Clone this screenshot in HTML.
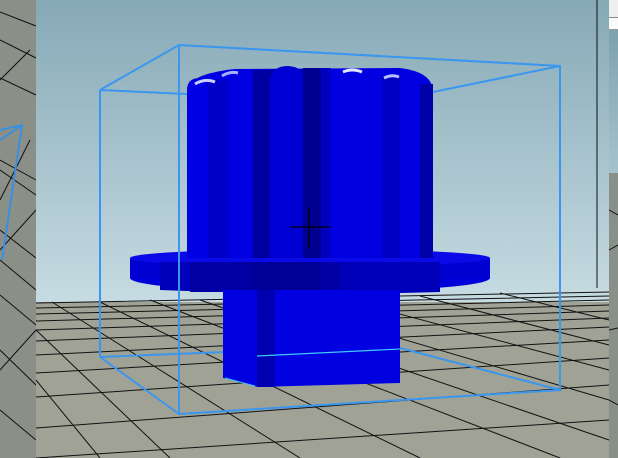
<!DOCTYPE html>
<html><head><style>
html,body{margin:0;padding:0;width:618px;height:458px;overflow:hidden;background:#8c9189}
svg{display:block}
</style></head><body>
<svg width="618" height="458" viewBox="0 0 618 458" xmlns="http://www.w3.org/2000/svg">
<defs>
<linearGradient id="sky" x1="0" y1="0" x2="0" y2="1">
<stop offset="0" stop-color="#86a9b6"/><stop offset="1" stop-color="#c6dbe2"/>
</linearGradient>
<linearGradient id="sky2" x1="0" y1="0" x2="0" y2="1">
<stop offset="0" stop-color="#7ea2b0"/><stop offset="1" stop-color="#a6c2cc"/>
</linearGradient>
</defs>
<rect x="0" y="0" width="36" height="458" fill="#8a9088"/>
<g stroke="#111" stroke-width="1" fill="none">
<path d="M0 12 L36 26 M0 40 L36 58 M0 78 L36 95 M0 160 L36 180 M0 170 L36 195 M0 230 L36 258 M0 260 L36 290 M0 295 L36 325 M0 350 L36 385 M0 410 L36 440 M0 200 L30 140 M0 250 L36 210 M0 370 L36 330 M0 80 L30 50"/>
</g>
<path d="M0 130 L22 125 L2 260 M0 140 L22 125" stroke="#3a8fe0" stroke-width="2" fill="none"/>
<rect x="36" y="0" width="573" height="302" fill="url(#sky)"/>
<rect x="36" y="302" width="573" height="156" fill="#a0a296"/>
<g stroke="#111" stroke-width="1" fill="none">
<path d="M36 303 L609 292 M36 308 L609 296 M36 314 L609 300 M36 321 L609 305 M36 330 L609 311 M36 341 L609 318 M36 355 L609 327 M36 373 L609 340 M36 397 L609 358 M36 428 L609 385 M36 458 L609 420"/>
<path d="M52 302 L300 458 M100 302 L420 458 M150 300 L560 458 M200 300 L609 440 M270 300 L609 400 M340 298 L609 370 M36 330 L170 458 M36 380 L100 458 M420 296 L609 345 M500 293 L609 320"/>
</g>
<line x1="597" y1="0" x2="597" y2="288" stroke="#111" stroke-width="1"/>
<rect x="609" y="0" width="9" height="458" fill="#899087"/>
<rect x="609" y="0" width="9" height="17" fill="#efefef"/>
<rect x="609" y="17" width="9" height="1" fill="#888"/>
<rect x="609" y="18" width="9" height="11" fill="#fafafa"/>
<rect x="609" y="29" width="9" height="1" fill="#999"/>
<rect x="609" y="30" width="9" height="143" fill="url(#sky2)"/>
<g stroke="#111" stroke-width="1"><path d="M609 210 L618 215 M609 250 L618 245 M609 330 L618 328 M609 400 L618 405"/></g>
<g stroke="#3a96ee" stroke-width="2" fill="none">
<path d="M100 90 L179 45 M100 90 L187 94 M100 90 L100 357 M100 357 L225 352 M400 348 L560 390 M560 66 L433 92"/>
</g>
<ellipse cx="310" cy="278" rx="180" ry="14" fill="#0000d8"/>
<rect x="130" y="258" width="360" height="20" fill="#0000d0"/>
<ellipse cx="310" cy="258" rx="180" ry="9" fill="#0a0ae8"/>
<path d="M160 262 L440 262 L440 292 Q310 296 160 290 Z" fill="#0000b8"/>
<rect x="190" y="262" width="150" height="30" fill="#0000a4"/>
<rect x="250" y="262" width="70" height="30" fill="#000099"/>
<!-- upper cylinder -->
<path d="M187 92 Q187 74 235 69 L400 68 Q433 72 433 92 L433 258 L187 258 Z" fill="#0000e0"/>
<path d="M187 258 L187 90 Q187 78 200 78 L215 78 Q228 78 228 90 L228 258 Z" fill="#0000e4"/>
<rect x="208" y="80" width="20" height="178" fill="#0000c8"/>
<rect x="253" y="70" width="52" height="188" fill="#0000a0"/>
<path d="M270 258 L270 80 Q272 66 288 66 Q304 67 305 80 L305 258 Z" fill="#0000d4"/>
<rect x="303" y="68" width="18" height="190" fill="#000090"/>
<rect x="321" y="68" width="10" height="190" fill="#0000c0"/>
<rect x="382" y="75" width="18" height="183" fill="#0000c4"/>
<rect x="420" y="84" width="13" height="174" fill="#0000a8"/>
<path d="M195 84 Q205 78 215 82" stroke="#c8d0ff" stroke-width="3" fill="none"/>
<path d="M222 76 Q230 71 238 73" stroke="#a8b0ff" stroke-width="3" fill="none"/>
<path d="M343 72 Q352 68 362 72" stroke="#e0e4ff" stroke-width="3" fill="none"/>
<path d="M384 78 Q392 74 399 77" stroke="#b8c0ff" stroke-width="3" fill="none"/>
<path d="M290 227 L330 227 M309 208 L309 248" stroke="#000" stroke-width="1.2"/>
<path d="M223 290 L400 290 L400 383 L258 387 L223 378 Z" fill="#0000e0"/>
<rect x="257" y="290" width="18" height="97" fill="#0000b0"/>
<path d="M257 356 L400 349" stroke="#40c8ff" stroke-width="1.2"/>
<path d="M225 378 L255 386" stroke="#40c8ff" stroke-width="1"/>
<g stroke="#3a96ee" stroke-width="2" fill="none">
<path d="M179 45 L560 66 L560 390 L179 414 Z M100 357 L179 414"/>
</g>
</svg>
</body></html>
